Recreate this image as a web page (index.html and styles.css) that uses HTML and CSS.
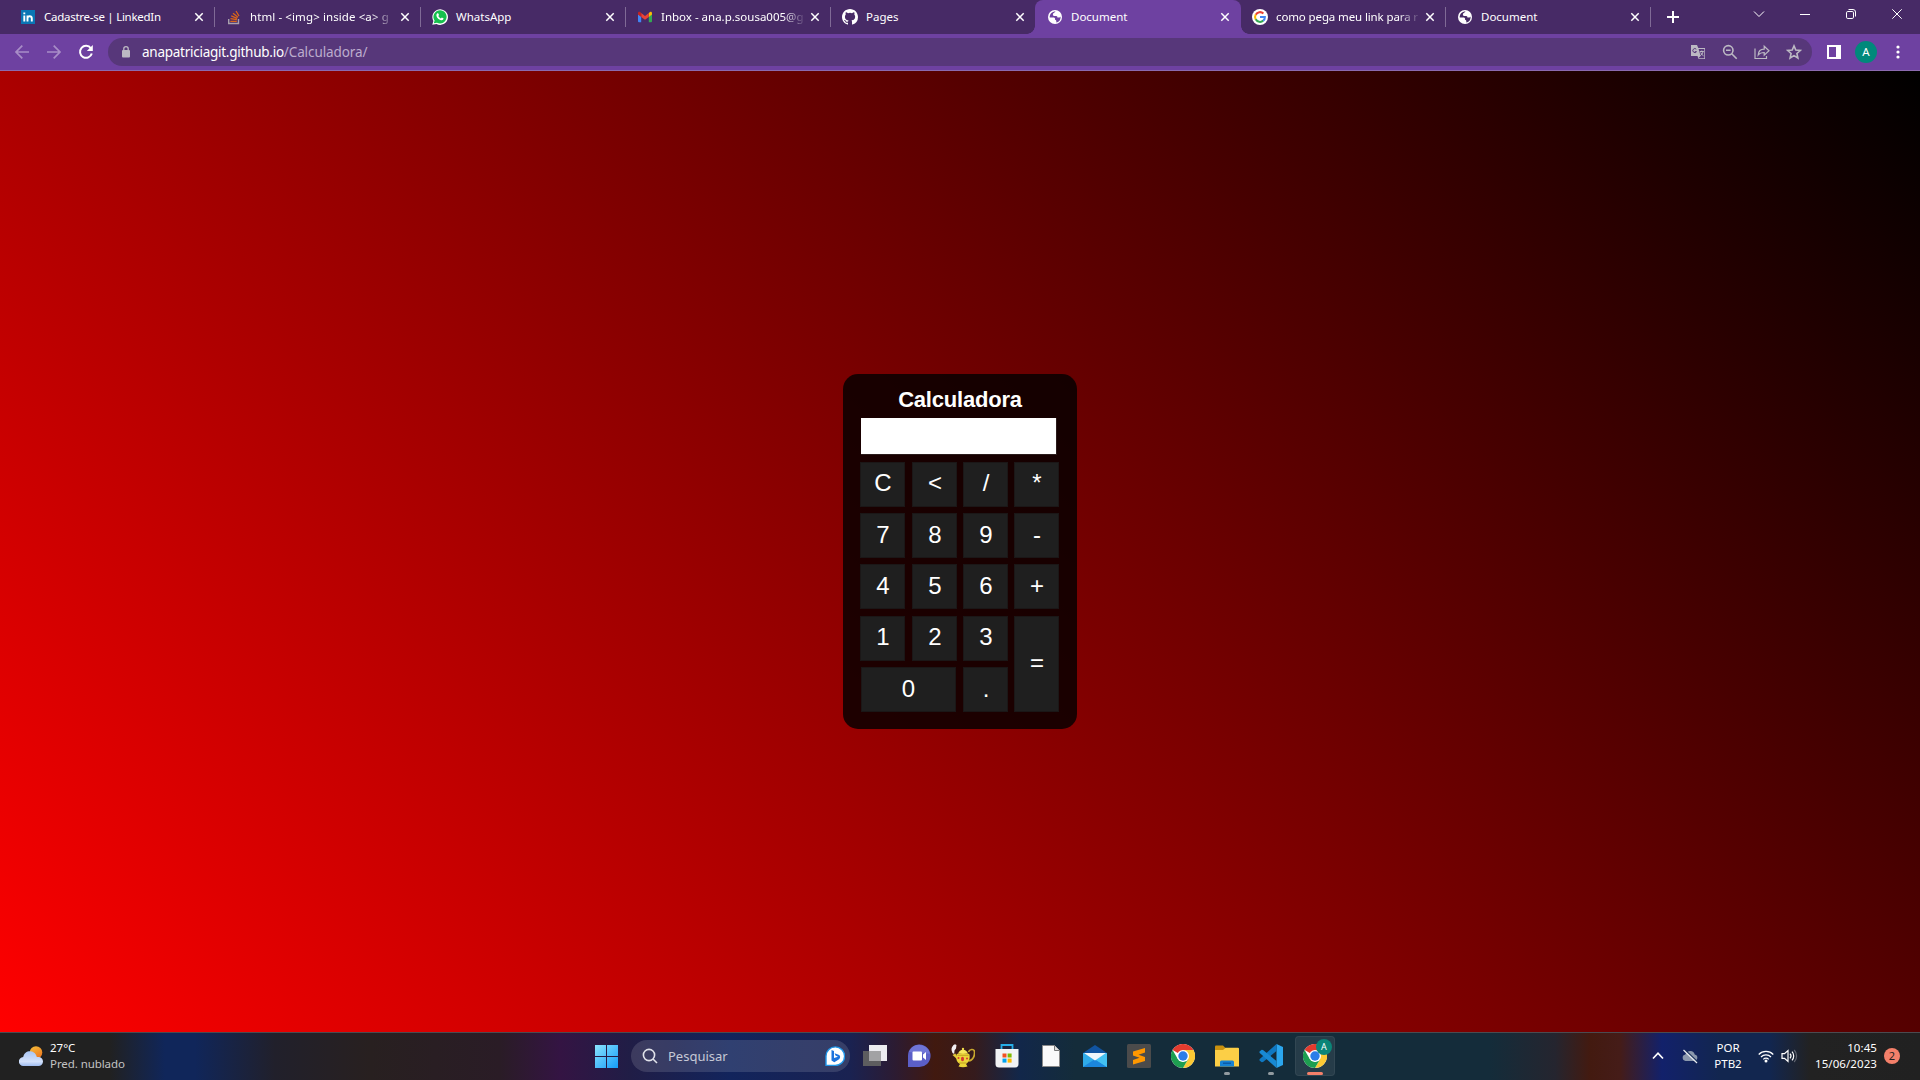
FILE: index.html
```html
<!DOCTYPE html>
<html lang="pt-BR">
<head>
<meta charset="utf-8">
<title>Document</title>
<link rel="stylesheet" href="styles.css">
</head>
<body>
<svg class="defs" width="0" height="0">
  <symbol id="x" viewBox="0 0 16 16"><path d="M4.300 4.300l7.400 7.400M11.700 4.300l-7.400 7.400" stroke="#fff" stroke-width="1.500" fill="none"/></symbol>
  <symbol id="globe" viewBox="0 0 16 16"><circle cx="8" cy="8" r="7" fill="#fff"/><path d="M8.600 2.600C7.600 4 6.300 3.800 5.900 5.300c-.2 1 .3 1.600 1.400 1.600h1.900c1 .1 1.300.8 1.200 1.600h1.800c.7-.1 1.100-.6 1.300-1.100.5 3-1.200 5.400-4.200 6 .2-1.400-.1-2.400-1.300-2.600V9.600c-.2-.8-.8-1-1.600-1H2.700C2.500 5.200 5 2.600 8.600 2.600z" fill="currentColor"/></symbol>
  <symbol id="chrome" viewBox="0 0 24 24"><circle cx="12" cy="12" r="12" fill="#fff"/><path d="M12 12L1.600 6A12 12 0 0 1 22.400 6z" fill="#e33b2e"/><path d="M22.400 6A12 12 0 0 1 12 24L17.200 15 17 9l-5-3z" fill="#fcc934"/><path d="M1.600 6A12 12 0 0 0 12 24l5.200-9-5.200 3-5.200-3z" fill="#1e9e50"/><circle cx="12" cy="12" r="6" fill="#fff"/><circle cx="12" cy="12" r="4.700" fill="#2b7de9"/></symbol>
</svg>

<header class="tabstrip">
  <div class="tab wide">
    <svg class="fav" viewBox="0 0 16 16"><path d="M1 1h14v14H1z" fill="#0a76b5"/><path d="M4.300 6.500v6M4.300 3.500v1.700M7.500 12.500v-6M7.500 9.500c0-3 4.300-3 4.300 0v3" stroke="#fff" stroke-width="1.900" fill="none"/></svg>
    <span class="label tight">Cadastre-se | LinkedIn</span><svg class="close"><use href="#x"/></svg>
  </div>
  <div class="tab wide">
    <svg class="fav" viewBox="0 0 16 16"><path d="M2.700 10v4.500h9.800V10" stroke="#a9a0ad" stroke-width="1.400" fill="none"/><path d="M4.300 12.300h6.500M4.500 9.600l6.400 1.100M5.200 6.800l6 2.600M7 4.200l5 4M10 2l3 5" stroke="#dc6518" stroke-width="1.300"/></svg>
    <span class="label fade loose">html - &lt;img&gt; inside &lt;a&gt; g</span><svg class="close"><use href="#x"/></svg>
  </div>
  <div class="tab">
    <svg class="fav" viewBox="0 0 16 16"><path d="M.3 15.800L1.400 12A7.800 7.800 0 1 1 4.500 15z" fill="#fff"/><path d="M1.800 14.300l.8-2.700A6.600 6.600 0 1 1 5 13.700z" fill="#16c04e"/><path d="M5.400 4.300c.6-.3 1 0 1.200.6l.4 1-.7 1.100c.6 1.200 1.400 1.900 2.600 2.400l.9-1 1.700.9c.1 1.400-1 2-2.100 1.900C6.500 10.800 4.200 8 4.400 6c.1-.8.5-1.500 1-1.700z" fill="#fff"/></svg>
    <span class="label">WhatsApp</span><svg class="close"><use href="#x"/></svg>
  </div>
  <div class="tab">
    <svg class="fav" viewBox="0 0 16 16"><path d="M1 5l3.200 2.400V13.300H2a1 1 0 0 1-1-1z" fill="#4285f4"/><path d="M15 5l-3.200 2.400v5.900H14a1 1 0 0 0 1-1z" fill="#34a853"/><path d="M11.800 4L13 3.100c1-.6 2 0 2 1.200V5.500l-3.200 2.400z" fill="#fbbc04"/><path d="M4.200 4L8 6.900 11.800 4v3.900L8 10.800 4.200 7.900z" fill="#ea4335"/><path d="M1 5.500V4.300c0-1.200 1-1.800 2-1.200L4.200 4v3.900z" fill="#c5221f"/></svg>
    <span class="label fade">Inbox - ana.p.sousa005@g</span><svg class="close"><use href="#x"/></svg>
  </div>
  <div class="tab last">
    <svg class="fav" viewBox="0 0 16 16"><path d="M8 0C3.580 0 0 3.580 0 8c0 3.540 2.290 6.530 5.470 7.590.4.070.55-.17.55-.38v-1.490c-2.010.37-2.530-.49-2.690-.94-.09-.23-.48-.94-.82-1.130-.28-.15-.68-.52-.01-.53.63-.01 1.080.58 1.230.82.72 1.210 1.870.87 2.330.66.070-.52.28-.87.51-1.070-1.780-.2-3.640-.89-3.640-3.950 0-.87.31-1.590.82-2.150-.08-.2-.36-1.020.08-2.120 0 0 .67-.21 2.200.82a7.400 7.400 0 0 1 4 0c1.530-1.040 2.200-.82 2.200-.82.44 1.100.16 1.920.08 2.120.51.56.82 1.270.82 2.150 0 3.070-1.870 3.750-3.650 3.950.29.25.54.73.54 1.480v2.200c0 .21.15.46.55.38A8 8 0 0 0 16 8c0-4.420-3.580-8-8-8z" fill="#fff"/></svg>
    <span class="label">Pages</span><svg class="close"><use href="#x"/></svg>
  </div>
  <div class="tab active">
    <svg class="fav"><use href="#globe"/></svg>
    <span class="label">Document</span><svg class="close"><use href="#x"/></svg>
  </div>
  <div class="tab">
    <svg class="fav" viewBox="0 0 16 16"><circle cx="8" cy="8" r="8" fill="#fff"/><g fill="none" stroke-width="2"><path d="M11.400 4.500A4.900 4.900 0 0 0 3.700 5.700" stroke="#ea4335"/><path d="M3.700 5.600a5 5 0 0 0 0 4.800" stroke="#fbbc04"/><path d="M3.700 10.300a4.900 4.900 0 0 0 7.600 1.300" stroke="#34a853"/><path d="M11.200 11.700A4.600 4.600 0 0 0 12.900 8H8" stroke="#4285f4"/></g></svg>
    <span class="label fade snug">como pega meu link para r</span><svg class="close"><use href="#x"/></svg>
  </div>
  <div class="tab">
    <svg class="fav"><use href="#globe"/></svg>
    <span class="label">Document</span><svg class="close"><use href="#x"/></svg>
  </div>
  <svg class="plus" viewBox="0 0 16 16"><path d="M8 2v12M2 8h12" stroke="#fff" stroke-width="2"/></svg>
  <div class="wincontrols">
    <svg viewBox="0 0 16 16"><path d="M3 5.500l5 5 5-5" /></svg>
    <svg viewBox="0 0 16 16"><path d="M3 8.500h10"/></svg>
    <svg viewBox="0 0 16 16"><rect x="3.500" y="5.500" width="7" height="7" rx="1.300"/><path d="M5.500 3.500h4.500a2.500 2.500 0 0 1 2.500 2.500v4.500"/></svg>
    <svg viewBox="0 0 16 16"><path d="M3.300 3.300l9.400 9.400M12.700 3.300l-9.400 9.400"/></svg>
  </div>
</header>

<nav class="toolbar">
  <svg class="nav dim" viewBox="0 0 16 16"><path d="M15 8H2M8.300 1.700L2 8l6.300 6.300"/></svg>
  <svg class="nav dim" viewBox="0 0 16 16"><path d="M1 8h13M7.700 1.700L14 8l-6.300 6.300"/></svg>
  <svg class="nav" viewBox="0 0 16 16"><path d="M12.900 4.300A6 6 0 1 0 13.800 9.500"/><path d="M14.800 1v6H8.800z" fill="#fff" stroke="none"/></svg>
  <div class="omnibox">
    <svg class="lock" viewBox="0 0 10 14"><rect x="1" y="5" width="8" height="7.500" rx="1" fill="#bcb9c3"/><path d="M2.800 5.500V3.800a2.200 2.200 0 0 1 4.400 0v1.700" stroke="#bcb9c3" stroke-width="1.300" fill="none"/></svg>
    <span class="url">anapatriciagit.github.io<span class="path">/Calculadora/</span></span>
    <div class="actions">
      <svg viewBox="0 0 16 16"><path d="M1 1h6l1.300 3H15v11H8.500L7.500 12H1z" fill="#bcb9c3"/><path d="M8.600 5l2 7-2.300 2.300h6V5z" fill="#57377a"/><path d="M6.300 5.200a2 2 0 1 0 .2 2.500H4.800" stroke="#57377a" fill="none"/><path d="M9.800 7.500h4M11.800 6.500v1M13 7.500c-.3 2-1.500 3.300-2.700 4.200M10.700 8.500c.5 1.500 1.500 2.500 2.800 3.300" stroke="#bcb9c3" fill="none"/></svg>
      <svg viewBox="0 0 16 16" class="line"><circle cx="6.300" cy="6.300" r="4.700"/><path d="M4 6.300h4.600M9.700 9.700l5 5"/></svg>
      <svg viewBox="0 0 16 16" class="line thin"><path d="M1 4.500v10h11.500V12M4.200 11c.3-4 2.800-5.800 6-5.800V2.200l4.800 4.500-4.800 4.500V8.500c-2.600 0-4.400.5-6 2.500z"/></svg>
      <svg viewBox="0 0 16 16" class="line"><path d="M8 1.900l1.800 4.200 4.500.4-3.400 3 1 4.500L8 11.600 4.100 14l1-4.500-3.400-3 4.500-.4z"/></svg>
    </div>
  </div>
  <svg class="side" viewBox="0 0 16 16"><path fill-rule="evenodd" d="M1 1h14v14H1zM3 3v10h7V3z" fill="#fff"/></svg>
  <span class="avatar">A</span>
  <svg class="dots" viewBox="0 0 16 16" fill="#fff"><circle cx="8" cy="3" r="1.600"/><circle cx="8" cy="8" r="1.600"/><circle cx="8" cy="13" r="1.600"/></svg>
</nav>

<main class="page">
  <section class="calculator">
    <h1>Calculadora</h1>
    <div class="display"></div>
    <div class="keys">
      <div class="key">C</div><div class="key">&lt;</div><div class="key">/</div><div class="key">*</div>
      <div class="key low">7</div><div class="key low">8</div><div class="key low">9</div><div class="key low">-</div>
      <div class="key low">4</div><div class="key low">5</div><div class="key low">6</div><div class="key low">+</div>
      <div class="key">1</div><div class="key">2</div><div class="key">3</div><div class="key equals">=</div>
      <div class="key low zero">0</div><div class="key low">.</div>
    </div>
  </section>
</main>

<footer class="taskbar">
  <div class="weather">
    <svg viewBox="0 0 24 20"><defs><linearGradient id="cl" x2="0" y2="1"><stop stop-color="#a9c6f5"/><stop offset=".7" stop-color="#d3e1fb"/><stop offset="1" stop-color="#9fbcf0"/></linearGradient><linearGradient id="sun" x2="0.500" y2="1"><stop stop-color="#f6bf3a"/><stop offset="1" stop-color="#ee7b21"/></linearGradient></defs><circle cx="17" cy="6.500" r="6.300" fill="url(#sun)"/><path d="M4.500 20a4.500 4.500 0 0 1-.3-9C5 7 8 5 11.300 5.200c3.500.2 6 2.800 6.500 5.800H19.500a4.500 4.500 0 0 1 0 9z" fill="url(#cl)"/></svg>
    <div class="lines"><span class="deg">27°C</span><span class="cond">Pred. nublado</span></div>
  </div>
  <div class="center">
    <svg class="start" viewBox="0 0 23 23"><defs><linearGradient id="win" x2="1" y2="1"><stop stop-color="#8be3fd"/><stop offset="1" stop-color="#149cf8"/></linearGradient></defs><path d="M0 0h11v11H0zM12 0h11v11H12zM0 12h11v11H0zM12 12h11v11H12z" fill="url(#win)"/></svg>
    <div class="search">
      <svg class="lens" viewBox="0 0 16 16"><circle cx="7" cy="7" r="5.600"/><path d="M11 11l4 4"/></svg>
      <span>Pesquisar</span>
      <svg class="bing" viewBox="0 0 20 20"><path d="M1 19.500V10a9.300 9.300 0 1 1 9.300 9.500z" fill="#fff" stroke="#2096e8" stroke-width="1.400"/><path d="M6.500 4l2.500 1v7l4-1.300-2.500-1.200L9.600 7.200l4 1.500c2 .9 2 3 .5 4.500l-4.800 3-2.800-1.600z" fill="#1c73dd"/></svg>
    </div>
    <div class="apps">
      <div class="app"><svg viewBox="0 0 24 24"><path d="M6 1h18v16H6z" fill="#ececf0"/><path d="M0 7h18v15H0z" fill="#5d5d5f"/><path d="M6 7h12v10H6z" fill="#a2a2a4"/></svg></div>
      <div class="app"><svg viewBox="0 0 24 24"><path d="M1 23V11.500A11.300 11.300 0 1 1 12 23z" fill="#5b5fc7"/><path d="M12 .7a11.300 11.300 0 0 1 11 9L2 8A11.300 11.300 0 0 1 12 .7z" fill="#7d83df" opacity=".6"/><rect x="5.500" y="7.500" width="9.500" height="9" rx="1" fill="#fff"/><path d="M16 10.500l3-2.500v8l-3-2.500z" fill="#fff"/></svg></div>
      <div class="app"><svg viewBox="0 0 24 24"><path d="M2.500 1C0 3.500 0 6 1.500 9l1.700 1L3.500 6.500 5 4.500 5.500 1 4 .3z" fill="#f2eef2"/><path d="M17.500 8c1-3 5.500-3.500 6-.5.500 4-1.500 9-6 9.500" fill="none" stroke="#c9a92e" stroke-width="1.700"/><path d="M1.500 11l3-1.500 3 7z" fill="#e3c93c"/><path d="M5.500 10.500Q7 9 12 9t6.500 1.500c.8 5-1 8-3.500 9.500l1.500 2.500q-4.500 1.500-9 0L9 20c-3-1.500-4.500-5-3.500-9.500z" fill="#ecd538"/><path d="M7 9.500q1.500-3.800 5-3.800t5 3.800z" fill="#f7e75c"/><circle cx="12" cy="5" r="1.200" fill="#f0db4a"/><path d="M6.500 11.300h11M8 19h7.500" stroke="#b7951d" stroke-width=".8"/><ellipse cx="11.500" cy="15" rx="1.500" ry="2.200" fill="#d43a30"/><circle cx="7.500" cy="14" r="1" fill="#d43a30"/><circle cx="16" cy="14.500" r="1" fill="#d43a30"/></svg></div>
      <div class="app"><svg viewBox="0 0 24 24"><path d="M6.500 5V1h11v4" fill="none" stroke="#27aee8" stroke-width="1.800"/><path d="M.5 5h23v15a3.500 3.500 0 0 1-3.500 3.500H4A3.500 3.500 0 0 1 .5 20z" fill="#f1f3f5"/><path d="M7.500 9.500h4v4h-4z" fill="#f25022"/><path d="M12.600 9.500h4v4h-4z" fill="#7fba00"/><path d="M7.500 14.600h4v4h-4z" fill="#00a4ef"/><path d="M12.600 14.600h4v4h-4z" fill="#ffb900"/></svg></div>
      <div class="app"><svg viewBox="0 0 24 24"><path d="M3.500 1.500h12l5 5v16h-17z" fill="#fafafa" stroke="#898989"/><path d="M15.500 1.500v5h5" fill="#ddd" stroke="#777"/></svg></div>
      <div class="app"><svg viewBox="0 0 24 24"><path d="M0 9l12-8 12 8v3H0z" fill="#1154a0"/><path d="M0 9h24v14H0z" fill="#2fabe9"/><path d="M24 9v14L12 16z" fill="#36b9f0"/><path d="M0 23l12-8 12 8z" fill="#1b86dc"/><path d="M12 15.500L24 9v14z" fill="#43c1f2"/><path d="M1 9h22l-11 7.500z" fill="#eff6fa"/></svg></div>
      <div class="app"><svg viewBox="0 0 24 24"><rect width="24" height="24" rx="1.500" fill="#4b4b4b"/><path d="M18 4v4.500l-6.500 2.200L18 13v4L6 20.500V16l6.500-2.200L6 11.500v-4z" fill="#ff9800"/></svg></div>
      <div class="app"><svg><use href="#chrome"/></svg></div>
      <div class="app run"><svg viewBox="0 0 24 24"><path d="M0 2.500Q0 1.500 1 1.500h7l2.500 2.500L8 7H0z" fill="#c9910e"/><path d="M0 6h8l2.500-2.300H23q1 0 1 1V22.500H0z" fill="#fccf46"/><path d="M5 22.500V18q0-1.500 1.500-1.500h11Q19 16.500 19 18v4.500z" fill="#1682d4"/><path d="M8 18.500h8v1.500H8z" fill="#0c5ba6"/></svg></div>
      <div class="app run"><svg viewBox="0 0 24 24"><path d="M17.500 0L24 3v18l-6.500 3z" fill="#2ba6ee"/><path d="M17.500 0v7L4 18l-1.300.2L.5 16.500v-1.300z" fill="#0f78c2"/><path d="M17.500 24v-7L4 6l-1.300-.2L.5 7.500v1.300z" fill="#1889d3"/></svg></div>
      <div class="app current"><svg><use href="#chrome"/></svg><span class="profile">A</span></div>
    </div>
  </div>
  <div class="tray">
    <svg class="up" viewBox="0 0 16 16"><path d="M3 10.500l5-5.300 5 5.300" stroke="#fff" stroke-width="1.700" fill="none"/></svg>
    <svg class="cloud" viewBox="0 0 16 16"><path d="M3.500 13a3.300 3.300 0 0 1-.2-6.500C4.300 4.500 6 3 8.500 3c2.200 0 3.700 1.500 4.200 3.500A3.300 3.300 0 0 1 12.500 13z" fill="#8b98ad"/><path d="M3 2l13 12" stroke="#17305a" stroke-width="1.200"/><path d="M1.500 2l13.500 13" stroke="#e8ebf0" stroke-width="1.200"/></svg>
    <div class="lang"><span>POR</span><span>PTB2</span></div>
    <svg class="wifi" viewBox="0 0 16 16"><path d="M.7 6.500a10.300 10.300 0 0 1 14.600 0M3 9a7 7 0 0 1 10 0M5.300 11.300a3.800 3.800 0 0 1 5.400 0"/><circle cx="8" cy="13" r="1.500" fill="#fff" stroke="none"/></svg>
    <svg class="vol" viewBox="0 0 17 16"><path d="M1 5.700h2.500L7 2.500v11L3.500 10.300H1zM9 5.700a3.500 3.500 0 0 1 0 4.600M11 3.700a6.300 6.300 0 0 1 0 8.600"/><path d="M13.200 2a8.700 8.700 0 0 1 0 12" opacity=".3"/></svg>
    <div class="clock"><span>10:45</span><span>15/06/2023</span></div>
    <span class="badge">2</span>
  </div>
</footer>
</body>
</html>
```
FILE: styles.css
```css
* { box-sizing: border-box; }
body { margin: 0; width: 1920px; height: 1080px; overflow: hidden; display: flex; flex-direction: column; font-family: "Noto Sans", "Open Sans", sans-serif; color: #fff; }
svg { display: block; flex: none; }
.defs { position: absolute; }

.tabstrip { height: 34px; background: #472a66; display: flex; padding-left: 9px; flex: none; color: #472a66; }
.tab { width: 205px; height: 34px; display: flex; align-items: center; padding-left: 11px; flex: none; background: linear-gradient(#806a96, #806a96) right 7px / 1px 20px no-repeat; }
.tab.wide { width: 206px; }
.tab.last { width: 204px; background: none; }
.fav { width: 16px; height: 16px; margin-right: 8px; }
.label { width: 142px; font-size: 11.5px; line-height: 18px; white-space: nowrap; color: #fff; }
.fade { -webkit-mask-image: linear-gradient(90deg, #000 122px, transparent 145px); mask-image: linear-gradient(90deg, #000 122px, transparent 145px); }
.tight { letter-spacing: -.27px; }
.snug { letter-spacing: -.12px; }
.loose { letter-spacing: .1px; }
.close { width: 16px; height: 16px; margin-left: 4px; }
.wide .close { margin-left: 5px; }
.tab.active { width: 206px; padding-left: 12px; background: #6e41a1; border-radius: 8px 8px 0 0; color: #6e41a1; position: relative; }
.tab.active::before, .tab.active::after { content: ""; position: absolute; bottom: 0; width: 8px; height: 8px; }
.tab.active::before { left: -8px; background: radial-gradient(circle at 0 0, transparent 7.5px, #6e41a1 8px); }
.tab.active::after { right: -8px; background: radial-gradient(circle at 100% 0, transparent 7.5px, #6e41a1 8px); }
.plus { width: 16px; height: 16px; margin: 9px 0 0 14px; }
.wincontrols { display: flex; margin-left: auto; padding-top: 6px; }
.wincontrols svg { width: 46px; height: 16px; fill: none; stroke: #fff; stroke-width: 1; }

.toolbar { height: 37px; background: #6e41a1; border-bottom: 1px solid #8b6aaf; display: flex; align-items: center; padding: 0 14px; flex: none; }
.nav { width: 16px; height: 16px; margin-right: 16px; fill: none; stroke: #fff; stroke-width: 2; }
.nav.dim { stroke: #a88dc7; stroke-width: 1.700; }
.omnibox { width: 1704px; height: 28px; border-radius: 14px; background: #57377a; display: flex; align-items: center; padding: 0 10px 0 13px; margin-left: -2px; }
.lock { width: 10px; height: 14px; }
.url { margin-left: 11px; font-size: 13.5px; line-height: 20px; letter-spacing: -.26px; white-space: nowrap; }
.path { color: #bcaccd; letter-spacing: -.1px; }
.actions { display: flex; gap: 16px; margin-left: auto; }
.actions svg { width: 16px; height: 16px; }
.line { fill: none; stroke: #bcb9c3; stroke-width: 1.600; }
.thin { stroke-width: 1.200; }
.side { width: 16px; height: 16px; margin-left: 14px; }
.avatar { width: 22px; height: 22px; border-radius: 50%; background: #00897b; font-size: 11.500px; line-height: 22px; text-align: center; margin-left: 13px; flex: none; }
.dots { width: 16px; height: 16px; margin-left: 13px; }

.page { height: 961px; background: linear-gradient(45deg, #f00, #000); flex: none; display: flex; align-items: center; justify-content: center; }
.calculator { width: 234px; height: 355px; border-radius: 15px; background: rgba(0, 0, 0, .8); padding: 13px 17px 0; font-family: "Liberation Sans", Arial, sans-serif; }
.calculator h1 { margin: 0; font-size: 22px; line-height: 25px; letter-spacing: -.2px; text-align: center; }
.display { width: 196px; height: 37px; background: #fff; border: 1px solid #2b1c1c; border-width: 0 1px 1px 0; margin: 6px 0 7px 1px; }
.keys { display: grid; grid-template-columns: 52px 51px 51px 45px; grid-template-rows: 51px 51px 52px 51px 45px; }
.key { width: 45px; height: 45px; background: #1f1f1f; border: 1px solid #1b1717; font-size: 24px; line-height: 39px; padding-left: 1px; text-align: center; }
.low { line-height: 41px; }
.zero { grid-column: span 2; width: 95px; margin-left: 1px; padding-left: 0; }
.equals { grid-row: span 2; height: 96px; line-height: 91px; }

.taskbar { height: 48px; flex: none; border-top: 1px solid #4b4b50; padding-bottom: 1px; display: flex; align-items: center; background: linear-gradient(90deg, #212121 0, #212121 110px, #10265a 165px, #10265a 195px, #21202b 275px, #282020 370px, #2a1c26 500px, #341443 560px, #201d46 630px, #12245c 730px, #1a2251 850px, #2c1b32 895px, #41190f 935px, #351b1d 975px, #12274a 1020px, #142c3a 1075px, #142c3a 1490px, #25252f 1555px, #431a10 1590px, #451c18 1620px, #12216b 1662px, #12264f 1720px, #12264f 1770px, #222 1810px, #212121); }
.weather { display: flex; align-items: center; padding-left: 19px; width: 595px; flex: none; }
.weather svg { width: 24px; height: 20px; margin-right: 7px; }
.lines, .lang, .clock { display: flex; flex-direction: column; font-size: 11.500px; line-height: 16px; white-space: nowrap; }
.cond { color: #c3c3c3; letter-spacing: -.08px; }
.center { display: flex; align-items: center; flex: none; }
.start { width: 23px; height: 23px; }
.search { width: 219px; height: 32px; border-radius: 16px; background: rgba(255, 255, 255, .13); margin: 0 5px 0 13px; display: flex; align-items: center; padding: 0 5px 0 11px; font-size: 13px; color: #c6c9d6; }
.lens { width: 16px; height: 16px; fill: none; stroke: #e0e2ea; stroke-width: 1.600; margin-right: 10px; }
.bing { width: 20px; height: 20px; margin-left: auto; }
.apps { display: flex; gap: 4px; }
.app { width: 40px; height: 40px; border-radius: 4px; display: flex; align-items: center; justify-content: center; position: relative; }
.app svg { width: 24px; height: 24px; }
.run::after, .current::after { content: ""; position: absolute; left: 17px; bottom: 1px; width: 6px; height: 3px; border-radius: 2px; background: #929ba0; }
.current { background: rgba(255, 255, 255, .08); border: 1px solid rgba(255, 255, 255, .06); }
.current::after { left: 11px; bottom: 0; width: 16px; background: #f4806a; }
.profile { position: absolute; left: 20px; top: 2px; width: 16px; height: 16px; border-radius: 50%; background: #0b8578; font-size: 9px; line-height: 16px; text-align: center; }
.tray { display: flex; align-items: center; margin-left: auto; padding-right: 20px; }
.tray svg { width: 16px; height: 16px; }
.cloud { margin-left: 16px; }
.lang { width: 30px; margin-left: 15px; text-align: center; align-items: center; }
.wifi, .vol { fill: none; stroke: #fff; stroke-width: 1.200; }
.wifi { margin-left: 15px; }
.tray .vol { width: 17px; margin-left: 7px; }
.clock { width: 70px; margin-left: 9px; align-items: flex-end; letter-spacing: .08px; }
.badge { width: 16px; height: 16px; border-radius: 50%; background: #f4806a; color: #222; font-size: 11px; line-height: 16px; text-align: center; margin-left: 7px; }
```
